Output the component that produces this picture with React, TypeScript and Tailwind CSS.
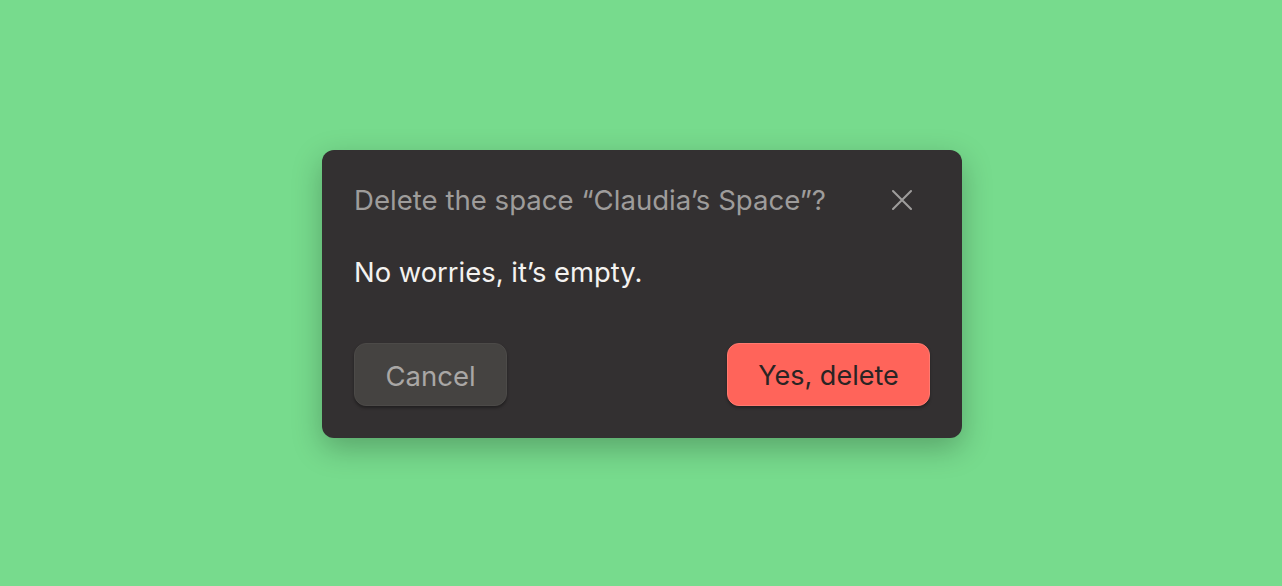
import React from "react"

export default function App() {
  return (
    <div
      className="flex items-center justify-center w-full h-[586px] bg-[#77db8d]"
      style={{ fontFamily: "Inter, 'Noto Sans', sans-serif" }}
    >
      <div className="w-[640px] ml-[2px] mt-[1px] p-8 rounded-[12px] bg-[#333031] shadow-[0_10px_30px_rgba(0,0,0,0.25)]">
        <div className="flex items-center justify-between h-9">
          <h2 className="text-[27.6px] leading-9 font-normal text-[#9e9c9b]">
            Delete the space “Claudia’s Space”?
          </h2>
          <button className="flex items-center justify-center w-10 h-10 mr-[8px] text-[#9e9c9b]">
            <svg width="22" height="22" viewBox="0 0 22 22" fill="none" stroke="currentColor" strokeWidth={2.1} strokeLinecap="round">
              <path d="M2 2L20 20M20 2L2 20" />
            </svg>
          </button>
        </div>
        <p className="mt-9 text-[27.4px] leading-9 text-[#f4f2f0]">No worries, it’s empty.</p>
        <div className="flex items-center justify-between mt-[53px]">
          <button className="h-[63px] w-[153px] pt-[5px] rounded-[12px] bg-[#454341] border border-[#4c4a48] shadow-[0_2px_3px_rgba(0,0,0,0.35)] text-[27.5px] text-[#a9a7a5]">
            Cancel
          </button>
          <button className="h-[63px] w-[203px] pt-[5px] rounded-[12px] bg-[#ff645a] border border-[#ff7a70] shadow-[0_2px_3px_rgba(0,0,0,0.3)] text-[27px] text-[#2a2424]">
            Yes, delete
          </button>
        </div>
      </div>
    </div>
  )
}
